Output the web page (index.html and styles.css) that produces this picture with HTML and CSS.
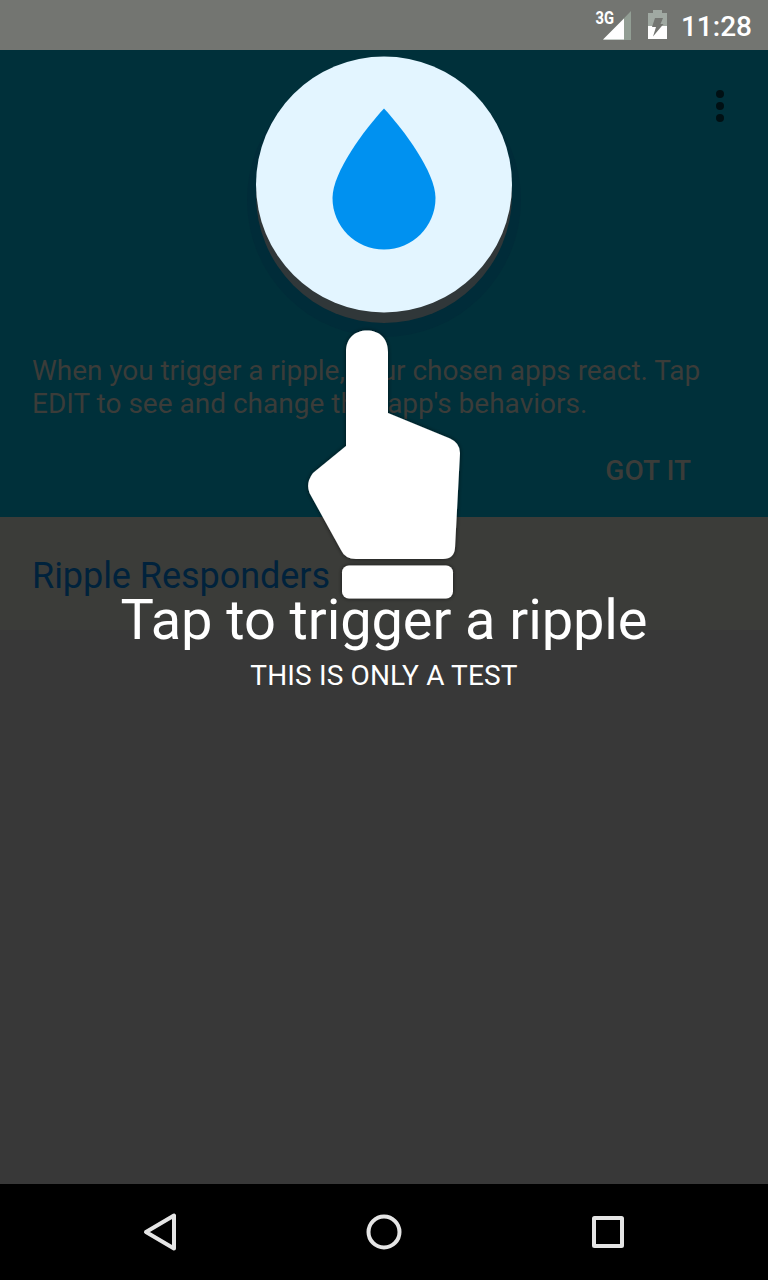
FILE: index.html
```html
<!DOCTYPE html>
<html lang="en">
<head>
<meta charset="utf-8">
<title>Ripple</title>
<link rel="stylesheet" href="styles.css">
</head>
<body>
<div class="screen">
  <header class="status-bar">
    <svg class="signal" width="40" height="30" viewBox="-4 0 40 30">
      <path d="M35 1V30H7z" fill="#929e94"/>
      <path d="M28 8.500V29.500H7z" fill="#fff"/>
      <text class="network" x="-0.500" y="14" textLength="18.500" lengthAdjust="spacingAndGlyphs">3G</text>
    </svg>
    <svg class="battery" width="19" height="29" viewBox="0 0 19 29">
      <path d="M5 0h9v3h5v13H0V3h5z" fill="#a0a9a2"/>
      <path d="M0 16h19v13H0z" fill="#fff"/>
      <path d="M7 8H15L12.500 14H15.500L5 26.500L8 17H4z" fill="#737571"/>
    </svg>
    <span class="clock">11:28</span>
  </header>
  <main class="app">
    <section class="intro">
      <div class="toolbar">
        <svg width="8" height="32" viewBox="0 0 8 32" fill="#001014">
          <circle cx="4" cy="4" r="4"/><circle cx="4" cy="16" r="4"/><circle cx="4" cy="28" r="4"/>
        </svg>
      </div>
      <p class="message"><span class="tight">When you trigger a ripple, your chosen apps react. Tap</span><br>EDIT to see and change that app's behaviors.</p>
      <div class="actions"><span class="dismiss">GOT IT</span></div>
    </section>
    <section class="responders"><h2 class="heading">Ripple Responders</h2></section>
    <div class="tutorial">
      <svg class="gesture" width="288" height="560" viewBox="240 50 288 560">
        <defs>
          <filter id="shade" x="-10%" y="-10%" width="120%" height="120%">
            <feDropShadow dx="0" dy="0" stdDeviation="2" flood-color="#000" flood-opacity="0.6"/>
          </filter>
        </defs>
        <circle cx="384" cy="200" r="137" fill="#002c39"/>
        <circle cx="384" cy="195" r="128" fill="#303739"/>
        <circle cx="384" cy="184.500" r="128" fill="#e3f5ff"/>
        <path d="M384 108.500C365 129 332.500 172 332.500 198C332.500 226.500 355.500 249.500 384 249.500S435.500 226.500 435.500 198C435.500 172 403 129 384 108.500Z" fill="#0091f0"/>
        <g fill="#fff" filter="url(#shade)">
          <path d="M346 352C346 338 355 330.500 367 330.500S388 338 388 352V413L450 438.500Q460 443 460 453L455 548Q454 559 443 559H356Q345 559 341 550L309.500 493Q305.500 483 313 473L346 446Z"/>
          <rect x="342" y="565.500" width="111" height="33" rx="7"/>
        </g>
      </svg>
      <div class="caption">Tap to trigger a ripple</div>
      <div class="note">THIS IS ONLY A TEST</div>
    </div>
  </main>
  <nav class="nav-bar">
    <svg width="40" height="40" viewBox="0 0 40 40"><path d="M6 20L34 3.500V36.500Z"/></svg>
    <svg width="40" height="40" viewBox="0 0 40 40"><circle cx="20" cy="20" r="15.500"/></svg>
    <svg width="40" height="40" viewBox="0 0 40 40"><rect x="6" y="6" width="28" height="28" rx="0.500"/></svg>
  </nav>
</div>
</body>
</html>
```
FILE: styles.css
```css
* { box-sizing: border-box; }
body { margin: 0; font-family: Roboto, sans-serif; background: #383838; }
.screen { width: 768px; height: 1280px; display: flex; flex-direction: column; overflow: hidden; }
.status-bar { height: 50px; background: #737571; display: flex; justify-content: flex-end; padding: 10px 16px 0 0; color: #fff; }
.signal { margin-right: 16px; }
.battery { margin-right: 14px; }
.network { font: 700 18px Roboto, sans-serif; fill: #fff; }
.clock { font-size: 28px; font-weight: 500; line-height: 33px; }
.app { flex: 1; position: relative; background: #383838; }
.intro { height: 467px; background: #00303a; display: flex; flex-direction: column; }
.toolbar { height: 304px; display: flex; justify-content: flex-end; padding: 40px 44px 0 0; }
.message { margin: 0; padding-left: 32px; font-size: 28px; line-height: 33px; color: #3b3c39; white-space: nowrap; }
.tight { letter-spacing: -0.05px; }
.actions { display: flex; justify-content: flex-end; padding: 34px 77px 0 0; }
.dismiss { font-size: 28px; font-weight: 500; line-height: 33px; color: #3b3c39; }
.responders { height: 113px; padding: 38px 32px 0; background: #3b3c39; }
.heading { margin: 0; font-size: 36px; font-weight: 400; line-height: 42px; letter-spacing: -0.05px; color: #00223c; }
.tutorial { position: absolute; inset: 0; display: flex; flex-direction: column; align-items: center; color: #fff; white-space: nowrap; }
.gesture { display: block; }
.caption { margin-top: -23px; font-size: 56px; line-height: 66px; letter-spacing: -0.1px; }
.note { margin-top: 6px; font-size: 28px; line-height: 33px; letter-spacing: 0.15px; }
.nav-bar { height: 96px; padding: 0 140px; background: #000; display: flex; justify-content: space-between; align-items: center; }
.nav-bar svg { fill: none; stroke: #e5e5e5; stroke-width: 4; stroke-linejoin: round; }
```
